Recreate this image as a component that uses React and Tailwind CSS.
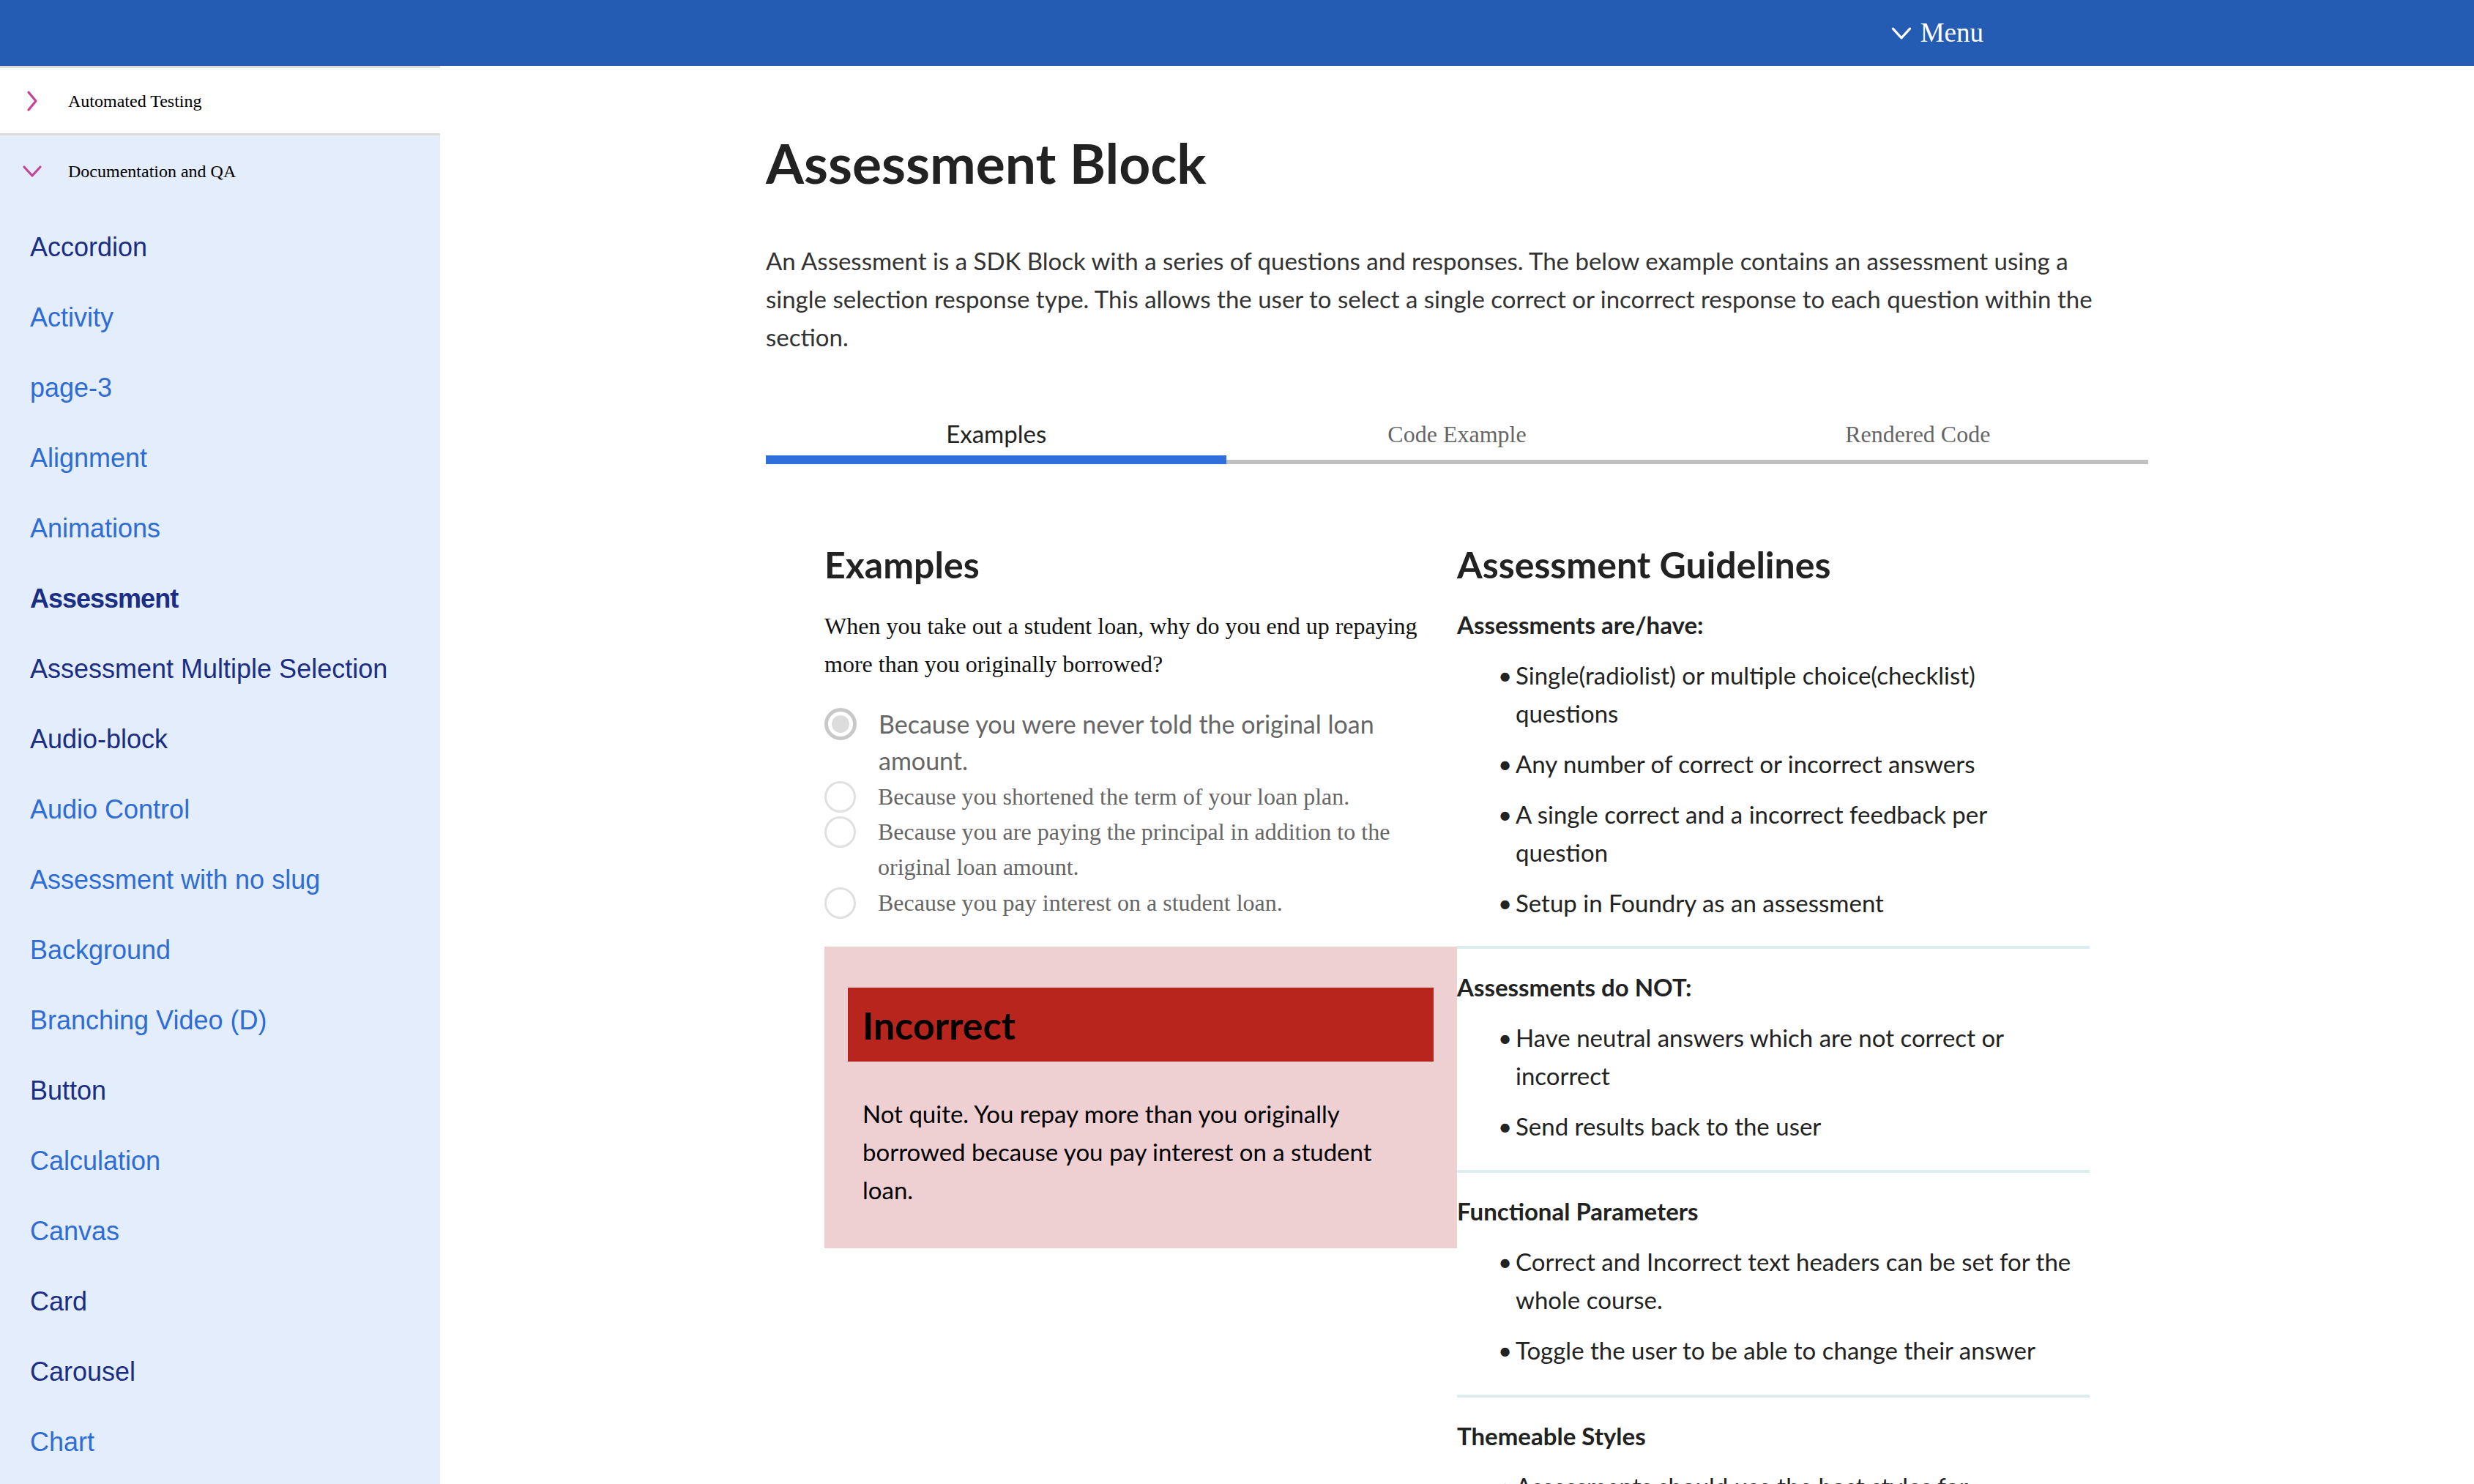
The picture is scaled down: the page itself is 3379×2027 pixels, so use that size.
import React from "react";

const items = [
  ["Accordion", "n"],
  ["Activity", "b"],
  ["page-3", "b"],
  ["Alignment", "b"],
  ["Animations", "b"],
  ["Assessment", "a"],
  ["Assessment Multiple Selection", "n"],
  ["Audio-block", "n"],
  ["Audio Control", "b"],
  ["Assessment with no slug", "b"],
  ["Background", "b"],
  ["Branching Video (D)", "b"],
  ["Button", "n"],
  ["Calculation", "b"],
  ["Canvas", "b"],
  ["Card", "n"],
  ["Carousel", "n"],
  ["Chart", "b"],
];

const sans = "font-['Lato','Open_Sans',sans-serif]";
const serif = "font-['Liberation_Serif','Times_New_Roman',serif]";

function ChevronRight() {
  return (
    <svg width="16" height="30" viewBox="0 0 16 30" fill="none">
      <path d="M3 3 L13 15 L3 27" stroke="#c4439a" strokeWidth="3.2" strokeLinecap="round" strokeLinejoin="round" />
    </svg>
  );
}

function ChevronDown({ color = "#c4439a", w = 28, h = 18, sw = 3.2 }) {
  return (
    <svg width={w} height={h} viewBox="0 0 28 18" fill="none">
      <path d="M3 3 L14 15 L25 3" stroke={color} strokeWidth={sw} strokeLinecap="round" strokeLinejoin="round" />
    </svg>
  );
}

function Radio({ selected }) {
  if (selected) {
    return (
      <span className="w-[44px] h-[44px] rounded-full border-[5px] border-[#c8c8c8] flex items-center justify-center bg-white">
        <span className="w-[24px] h-[24px] rounded-full bg-[#dcdcdc]" />
      </span>
    );
  }
  return <span className="w-[43px] h-[43px] rounded-full border-[3px] border-[#e0e0e0] bg-white" />;
}

function Bullet({ children }) {
  return (
    <li className="flex mb-[17px] leading-[52px]">
      <span className="w-[24px] shrink-0">•</span>
      <span className="whitespace-nowrap">{children}</span>
    </li>
  );
}

export default function App() {
  return (
    <div className="w-[3379px] h-[2027px] overflow-hidden bg-white flex flex-col">
      <header className="h-[90px] shrink-0 bg-[#245bb3] flex items-center justify-end pr-[670px]">
        <div className={`flex items-center gap-[11px] text-white text-[37px] ${serif}`}>
          <ChevronDown color="#ffffff" w={30} h={19} sw={3} />
          <span>Menu</span>
        </div>
      </header>

      <div className="flex flex-1 min-h-0">
        <aside className="w-[601px] shrink-0 bg-[#e3edfc] flex flex-col overflow-hidden">
          <div className={`h-[95px] shrink-0 bg-white border-y-[3px] border-[#dcdcdc] flex items-center ${serif} text-[24px] text-black`}>
            <span className="w-[93px] pl-[36px] flex items-center"><ChevronRight /></span>
            <span>Automated Testing</span>
          </div>
          <div className={`h-[97px] shrink-0 flex items-center ${serif} text-[24px] text-black`}>
            <span className="w-[93px] pl-[30px] flex items-center"><ChevronDown /></span>
            <span>Documentation and QA</span>
          </div>
          <ul className="pt-[8px] shrink-0 font-['Liberation_Sans','Arial',sans-serif] text-[36px]">
            {items.map(([label, kind]) => (
              <li
                key={label}
                className={`h-[96px] flex items-center pl-[41px] ${
                  kind === "b"
                    ? "text-[#2e6cd6]"
                    : kind === "a"
                    ? "text-[#1b2e85] font-bold tracking-[-1px]"
                    : "text-[#1b2e85]"
                }`}
              >
                {label}
              </li>
            ))}
          </ul>
        </aside>

        <main className="flex-1 flex justify-center">
          <div className={`w-[1888px] ${sans} text-[#222]`}>
            <h1 className="mt-[89px] text-[75px] leading-[86px] font-bold text-[#222]">Assessment Block</h1>
            <p className="mt-[65px] text-[33px] leading-[52px] text-[#333] whitespace-nowrap">
              An Assessment is a SDK Block with a series of questions and responses. The below example contains an assessment using a
              <br />
              single selection response type. This allows the user to select a single correct or incorrect response to each question within the
              <br />
              section.
            </p>

            <div className="mt-[85px] grid grid-cols-3">
              <div className="flex flex-col">
                <div className={`h-[44px] flex items-center justify-center text-[33px] text-[#222] ${sans}`}>Examples</div>
                <div className="mt-[7px] h-[12px] bg-[#2f6fdc]" />
              </div>
              <div className="flex flex-col">
                <div className={`h-[44px] flex items-center justify-center text-[32px] text-[#666] ${serif}`}>Code Example</div>
                <div className="mt-[7px] h-[12px] flex items-end"><div className="h-[6px] w-full bg-[#c0c0c0]" /></div>
              </div>
              <div className="flex flex-col">
                <div className={`h-[44px] flex items-center justify-center text-[32px] text-[#666] ${serif}`}>Rendered Code</div>
                <div className="mt-[7px] h-[12px] flex items-end"><div className="h-[6px] w-full bg-[#c0c0c0]" /></div>
              </div>
            </div>

            <div className="mt-[108px] px-[80px] grid grid-cols-2">
              <div>
                <h2 className="text-[50px] leading-[58px] font-bold text-[#222]">Examples</h2>
                <p className={`mt-[29px] ${serif} text-[32px] leading-[52px] text-[#111] whitespace-nowrap`}>
                  When you take out a student loan, why do you end up repaying
                  <br />
                  more than you originally borrowed?
                </p>
                <div className="mt-[31px] flex flex-col">
                  <div className="flex gap-[30px]">
                    <span className="h-[50px] flex items-center shrink-0"><Radio selected /></span>
                    <span className={`${sans} text-[34px] leading-[50px] text-[#666] whitespace-nowrap`}>
                      Because you were never told the original loan
                      <br />
                      amount.
                    </span>
                  </div>
                  <div className="flex gap-[30px]">
                    <span className="h-[48px] flex items-center shrink-0"><Radio /></span>
                    <span className={`${serif} text-[32px] leading-[48px] text-[#666] whitespace-nowrap`}>
                      Because you shortened the term of your loan plan.
                    </span>
                  </div>
                  <div className="flex gap-[30px]">
                    <span className="h-[48px] flex items-center shrink-0"><Radio /></span>
                    <span className={`${serif} text-[32px] leading-[48px] text-[#666] whitespace-nowrap`}>
                      Because you are paying the principal in addition to the
                      <br />
                      original loan amount.
                    </span>
                  </div>
                  <div className="flex gap-[30px]">
                    <span className="h-[50px] flex items-center shrink-0"><Radio /></span>
                    <span className={`${serif} text-[32px] leading-[50px] text-[#666] whitespace-nowrap`}>
                      Because you pay interest on a student loan.
                    </span>
                  </div>
                </div>

                <div className="mt-[35px] bg-[#eecfd2] pt-[56px] pb-[54px] px-[32px]">
                  <div className="h-[101px] bg-[#b8251c] flex items-center pl-[20px]">
                    <span className="text-[52px] font-bold text-black">Incorrect</span>
                  </div>
                  <p className="mt-[45px] px-[20px] text-[33px] leading-[52px] text-black whitespace-nowrap">
                    Not quite. You repay more than you originally
                    <br />
                    borrowed because you pay interest on a student
                    <br />
                    loan.
                  </p>
                </div>
              </div>

              <div className="text-[33px] text-[#222]">
                <h2 className="text-[50px] leading-[58px] font-bold text-[#222]">Assessment Guidelines</h2>
                <div className="mt-[27px] pb-[16px] border-b-[4px] border-[#dcedee]">
                  <h3 className="font-bold leading-[52px]">Assessments are/have:</h3>
                  <ul className="mt-[17px] pl-[56px]">
                    <Bullet>Single(radiolist) or multiple choice(checklist)<br />questions</Bullet>
                    <Bullet>Any number of correct or incorrect answers</Bullet>
                    <Bullet>A single correct and a incorrect feedback per<br />question</Bullet>
                    <Bullet>Setup in Foundry as an assessment</Bullet>
                  </ul>
                </div>
                <div className="pt-[26px] pb-[17px] border-b-[4px] border-[#dcedee]">
                  <h3 className="font-bold leading-[52px]">Assessments do NOT:</h3>
                  <ul className="mt-[17px] pl-[56px]">
                    <Bullet>Have neutral answers which are not correct or<br />incorrect</Bullet>
                    <Bullet>Send results back to the user</Bullet>
                  </ul>
                </div>
                <div className="pt-[26px] pb-[18px] border-b-[4px] border-[#dcedee]">
                  <h3 className="font-bold leading-[52px]">Functional Parameters</h3>
                  <ul className="mt-[17px] pl-[56px]">
                    <Bullet>Correct and Incorrect text headers can be set for the<br />whole course.</Bullet>
                    <Bullet>Toggle the user to be able to change their answer</Bullet>
                  </ul>
                </div>
                <div className="pt-[26px] pb-[16px]">
                  <h3 className="font-bold leading-[52px]">Themeable Styles</h3>
                  <ul className="mt-[17px] pl-[56px]">
                    <Bullet>Assessments should use the host styles for</Bullet>
                  </ul>
                </div>
              </div>
            </div>
          </div>
        </main>
      </div>
    </div>
  );
}
